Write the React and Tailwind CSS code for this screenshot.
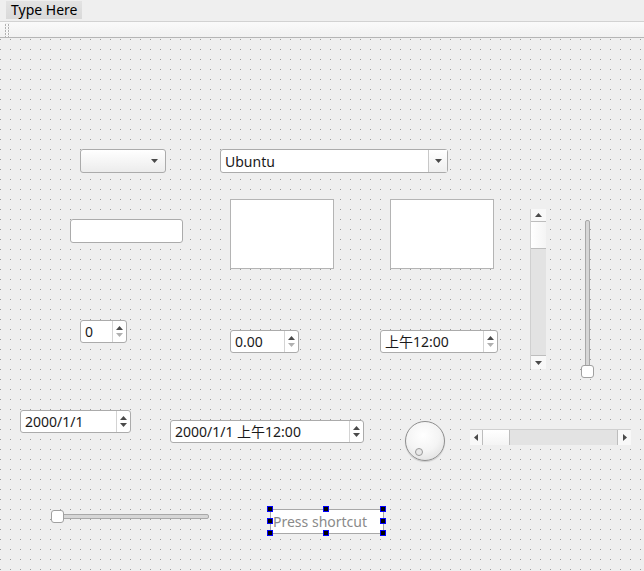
import React from "react";

const F = "font-['Noto_Sans','DejaVu_Sans','Noto_Sans_CJK_SC',sans-serif]";

function Tri({ up, dark = true }) {
  return (
    <svg width="7" height="4" viewBox="0 0 7 4" className="block">
      {up ? (
        <polygon points="0,4 7,4 3.5,0" fill={dark ? "#4a4a4a" : "#b0b0b0"} />
      ) : (
        <polygon points="0,0 7,0 3.5,4" fill={dark ? "#4a4a4a" : "#b0b0b0"} />
      )}
    </svg>
  );
}

function Spin({ className, text, downDark = true }) {
  return (
    <div
      className={`absolute flex rounded-[3px] border border-[#ababab] bg-white ${className}`}
    >
      <div className={`flex flex-1 items-center pl-[4px] pt-[1px] text-[14px] leading-none text-[#1a1a1a] ${F}`}>
        {text}
      </div>
      <div className="flex w-[14px] flex-col items-center justify-center gap-[3px] border-l border-[#d4d4d4]">
        <Tri up dark />
        <Tri dark={downDark} />
      </div>
    </div>
  );
}

function Handle({ className }) {
  return (
    <div className={`absolute h-[6px] w-[6px] border border-[#0000ff] bg-black ${className}`} />
  );
}

export default function App() {
  return (
    <div className={`w-[644px] h-[571px] overflow-hidden bg-[#efefef] ${F}`}>
      {/* menubar */}
      <div className="flex h-[21px] items-start bg-[#efefef] pl-[6px] pt-[1px]">
        <div className="flex h-[18px] items-center bg-gradient-to-b from-[#e3e3e3] to-[#d9d9d9] px-[5px] text-[14px] leading-none text-black">
          Type Here
        </div>
      </div>
      {/* toolbar */}
      <div className="flex h-[17px] items-center border-t border-b border-t-[#d2d2d2] border-b-[#b5b5b5] bg-gradient-to-b from-[#fafafa] to-[#f1f1f1] pl-[5px]">
        <div className="h-[14px] w-[5px] bg-[linear-gradient(#efefef_1px,transparent_1px),linear-gradient(90deg,#b0b0b0_1px,#fafafa_1px)] bg-[size:3px_3px]" />
      </div>
      {/* form canvas */}
      <div className="relative h-[533px] bg-[linear-gradient(transparent_1px,#efefef_1px),linear-gradient(90deg,#9c9c9c_1px,#efefef_1px)] bg-[size:10px_10px] bg-[position:0_1px]">
        {/* plain combobox */}
        <div className="absolute left-[80px] top-[111px] flex h-[24px] w-[86px] items-center justify-end rounded-[3px] border border-[#ababab] bg-gradient-to-b from-white to-[#ececec] pr-[7px]">
          <Tri dark />
        </div>
        {/* editable combobox */}
        <div className="absolute left-[220px] top-[111px] flex h-[24px] w-[228px] rounded-[3px] border border-[#ababab] bg-white">
          <div className="flex flex-1 items-center pl-[4px] pt-[1px] text-[14px] leading-none text-[#1a1a1a]">
            Ubuntu
          </div>
          <div className="flex w-[19px] items-center justify-center border-l border-[#c8c8c8] bg-gradient-to-b from-white to-[#efefef]">
            <Tri dark />
          </div>
        </div>
        {/* line edit */}
        <div className="absolute left-[70px] top-[181px] h-[24px] w-[113px] rounded-[3px] border border-[#ababab] bg-white" />
        {/* text edits */}
        <div className="absolute left-[230px] top-[161px] h-[70px] w-[104px] border border-[#b4b4b4] bg-white" />
        <div className="absolute left-[390px] top-[161px] h-[70px] w-[104px] border border-[#b4b4b4] bg-white" />
        {/* vertical scrollbar */}
        <div className="absolute left-[530px] top-[171px] flex h-[160px] w-[16px] flex-col border-l border-[#d0d0d0] bg-[#e3e3e3]">
          <div className="flex h-[13px] items-center justify-center border-b border-[#bdbdbd] bg-[#f8f8f8]">
            <Tri up dark />
          </div>
          <div className="h-[27px] border-b border-[#bdbdbd] bg-gradient-to-r from-white to-[#f4f4f4]" />
          <div className="flex-1" />
          <div className="flex h-[14px] items-center justify-center border-t border-[#bdbdbd] bg-[#f8f8f8]">
            <Tri dark />
          </div>
        </div>
        {/* vertical slider */}
        <div className="absolute left-[585px] top-[182px] h-[150px] w-[5px] rounded-[2px] border border-[#a8a8a8] bg-[#d6d6d6]" />
        <div className="absolute left-[581px] top-[327px] h-[13px] w-[13px] rounded-[3px] border border-[#a0a0a0] bg-white" />
        {/* spin boxes */}
        <Spin className="left-[80px] top-[282px] h-[23px] w-[47px]" text="0" downDark={false} />
        <Spin className="left-[230px] top-[292px] h-[23px] w-[69px]" text="0.00" downDark={false} />
        <Spin className="left-[380px] top-[292px] h-[23px] w-[118px]" text="上午12:00" downDark={false} />
        <Spin className="left-[20px] top-[372px] h-[23px] w-[111px]" text="2000/1/1" />
        <Spin className="left-[170px] top-[382px] h-[23px] w-[194px]" text="2000/1/1 上午12:00" />
        {/* dial */}
        <div className="absolute left-[405px] top-[383px] h-[40px] w-[40px] rounded-full border border-[#8e8e8e] bg-[radial-gradient(circle_at_45%_35%,#ffffff_0%,#f4f4f4_50%,#d8d8d8_100%)] shadow-[0_1px_1px_rgba(0,0,0,0.15)]">
          <div className="absolute left-[9px] top-[26px] h-[8px] w-[8px] rounded-full border border-[#999] bg-[#e8e8e8]" />
        </div>
        {/* horizontal scrollbar */}
        <div className="absolute left-[470px] top-[391px] flex h-[16px] w-[161px] border-t border-[#d0d0d0] bg-[#e3e3e3]">
          <div className="flex w-[13px] items-center justify-center border-r border-[#bdbdbd] bg-[#f8f8f8]">
            <svg width="4" height="7" viewBox="0 0 4 7"><polygon points="4,0 4,7 0,3.5" fill="#4a4a4a" /></svg>
          </div>
          <div className="w-[27px] border-r border-[#bdbdbd] bg-gradient-to-b from-white to-[#f4f4f4]" />
          <div className="flex-1" />
          <div className="flex w-[14px] items-center justify-center border-l border-[#bdbdbd] bg-[#f8f8f8]">
            <svg width="4" height="7" viewBox="0 0 4 7"><polygon points="0,0 0,7 4,3.5" fill="#4a4a4a" /></svg>
          </div>
        </div>
        {/* horizontal slider */}
        <div className="absolute left-[60px] top-[476px] h-[5px] w-[149px] rounded-[2px] border border-[#a8a8a8] bg-[#d6d6d6]" />
        <div className="absolute left-[51px] top-[472px] h-[13px] w-[13px] rounded-[3px] border border-[#a0a0a0] bg-white" />
        {/* key sequence edit */}
        <div className="absolute left-[270px] top-[471px] flex h-[25px] w-[114px] items-center border border-[#a8a8a8] bg-white pl-[2px] pt-[1px] text-[14px] leading-none text-[#8a8a8a]">
          Press shortcut
        </div>
        <Handle className="left-[267px] top-[468px]" />
        <Handle className="left-[323px] top-[468px]" />
        <Handle className="left-[380px] top-[468px]" />
        <Handle className="left-[267px] top-[480px]" />
        <Handle className="left-[380px] top-[480px]" />
        <Handle className="left-[267px] top-[492px]" />
        <Handle className="left-[323px] top-[492px]" />
        <Handle className="left-[380px] top-[492px]" />
      </div>
    </div>
  );
}
